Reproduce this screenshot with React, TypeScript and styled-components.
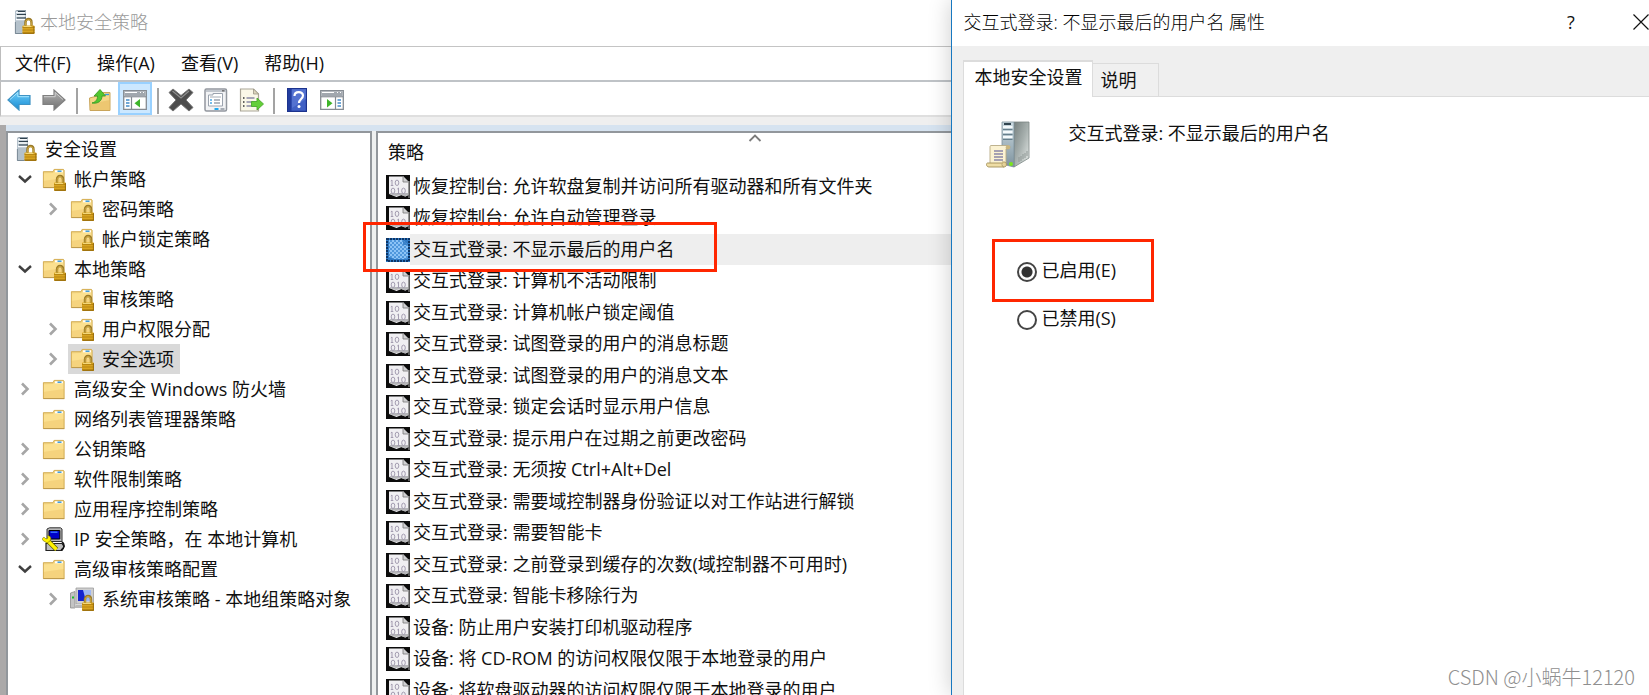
import React from "react";
import styled, { createGlobalStyle } from "styled-components";

const GlobalStyle = createGlobalStyle`
  * { box-sizing: border-box; }
  body {
    margin: 0;
    background: #fff;
    color: #101010;
    font-family: "Open Sans", "Noto Sans CJK SC", sans-serif;
    font-size: 18px;
    line-height: 24px;
  }
  button, input { font: inherit; color: inherit; margin: 0; }
  svg { display: block; flex: none; }
`;

const Desktop = styled.div`
  position: relative;
  display: flex;
  height: 100vh;
  overflow: hidden;
`;

/* ---------- console window ---------- */

const ConsoleWindow = styled.main`
  flex: 952 1 0;
  min-width: 0;
  display: flex;
  flex-direction: column;
  overflow: hidden;
`;

const TitleBar = styled.header`
  flex: none;
  height: 46px;
  padding: 0 0 2px 14px;
  display: flex;
  align-items: center;
  gap: 5px;
`;

const WindowTitle = styled.h1`
  margin: 0;
  font-size: 18px;
  font-weight: 300;
  color: #999;
`;

const MenuBar = styled.nav`
  flex: none;
  height: 36px;
  padding: 0 0 2px 14px;
  border-top: 1px solid #c4c4c4;
  border-bottom: 2px solid #bfc3c7;
  border-left: 1px solid #bdbdbd;
  display: flex;
  align-items: center;
  gap: 26px;
`;

const MenuButton = styled.button`
  padding: 0;
  border: 0;
  background: none;
`;

const ToolBar = styled.div`
  flex: none;
  height: 35px;
  padding-left: 1px;
  border-bottom: 2px solid #dfdfdf;
  border-left: 1px solid #bdbdbd;
  display: flex;
  align-items: center;
  gap: 1px;
`;

const ToolButton = styled.button<{ $active?: boolean }>`
  width: 34px;
  height: 33px;
  padding: 3px 0 0;
  display: flex;
  justify-content: center;
  align-items: center;
  border: 2px solid ${(p) => (p.$active ? "#99d1ff" : "transparent")};
  background: ${(p) => (p.$active ? "#cce8ff" : "none")};
`;

const ToolDivider = styled.span`
  width: 2px;
  height: 26px;
  margin: 4px 4px 0;
  background: #a3a3a3;
`;

const Spacer = styled.div`
  flex: none;
  height: 8px;
  background: #efefef;
`;

const Workspace = styled.div`
  flex: 1;
  min-height: 0;
  display: flex;
  gap: 4px;
  border-left: 6px solid #aba9a9;
  background: #eef0f0;
  box-shadow: inset 0 6px 0 #d6e3f0;
  padding-top: 6px;
`;

const TreePane = styled.nav`
  flex: 366 0 0;
  max-width: 366px;
  border: solid #92979c;
  border-width: 2px 2px 0 2px;
  background: #fff;
  padding-top: 1px;
  overflow: hidden;
`;

const TreeList = styled.ul`
  list-style: none;
  margin: 0;
  padding: 0;
`;

const TreeRow = styled.li<{ $level: number }>`
  height: 30px;
  padding-left: ${(p) => (p.$level === 2 ? 34 : 6)}px;
  display: flex;
  align-items: center;
`;

const Twisty = styled.button`
  width: 22px;
  height: 30px;
  margin-right: 4px;
  padding: 0;
  border: 0;
  background: none;
  display: flex;
  align-items: center;
  justify-content: center;
`;

const TreeLabel = styled.span<{ $selected?: boolean }>`
  height: 30px;
  padding: 0 6px 0 2px;
  display: flex;
  align-items: center;
  gap: 8px;
  white-space: nowrap;
  background: ${(p) => (p.$selected ? "#d9d9d9" : "transparent")};
`;

const ListPane = styled.section`
  flex: 570 1 0;
  min-width: 0;
  border: solid #92979c;
  border-width: 2px 0 0 2px;
  background: #fff;
  overflow: hidden;
`;

const PolicyTable = styled.table`
  width: 100%;
  min-width: 754px;
  border-collapse: collapse;
`;

const HeaderCell = styled.th`
  padding: 0;
  font-weight: 400;
`;

const HeaderContent = styled.div`
  height: 38px;
  display: grid;
  grid-template-columns: 1fr 14px 1fr;
  align-items: center;
  padding: 0 10px 1px;
  text-align: left;

  svg { align-self: start; }
`;

const PolicyCell = styled.td`
  padding: 0 0 0 8px;
`;

const PolicyRow = styled.tr``;

const PolicyContent = styled.div`
  height: 31px;
  display: flex;
  align-items: center;

  ${PolicyRow}:nth-child(even) & { height: 32px; }
`;

const PolicyName = styled.span<{ $selected?: boolean }>`
  flex: 1;
  align-self: stretch;
  display: flex;
  align-items: center;
  padding: 0 0 2px 3px;
  white-space: nowrap;
  background: ${(p) => (p.$selected ? "#eeeeee" : "transparent")};
`;

/* ---------- properties dialog ---------- */

const Dialog = styled.section`
  position: relative;
  flex: 697 1 0;
  min-width: 0;
  display: flex;
  flex-direction: column;
  border-left: 1px solid #1878c0;
  background: #efefef;
  box-shadow: 0 0 22px rgba(0, 0, 0, 0.2);
`;

const DialogTitleBar = styled.header`
  flex: none;
  height: 46px;
  padding: 0 0 2px 11px;
  background: #fff;
  display: flex;
  align-items: center;
`;

const DialogTitle = styled.h2`
  flex: 1;
  margin: 0;
  font-size: 18px;
  font-weight: 300;
  color: #000;
  white-space: nowrap;
`;

const CaptionButton = styled.button`
  width: 24px;
  height: 44px;
  margin-left: 46px;
  padding: 0;
  border: 0;
  background: none;
  text-align: center;

  &:last-child {
    width: 16px;
    margin-left: 50px;
  }
`;

const TabStrip = styled.div`
  flex: none;
  height: 51px;
  padding: 14px 0 0 11px;
  display: flex;
  align-items: flex-end;
`;

const Tab = styled.button<{ $active?: boolean }>`
  height: ${(p) => (p.$active ? 37 : 34)}px;
  width: ${(p) => (p.$active ? 130 : 66)}px;
  padding: ${(p) => (p.$active ? "0 0 6px 10px" : "0 0 0 7px")};
  border: solid #dcdcdc;
  border-width: ${(p) => (p.$active ? "2px 1px 0 1px" : "1px 1px 1px 0")};
  background: ${(p) => (p.$active ? "#fff" : "#f0f0f0")};
  text-align: left;
  white-space: nowrap;
`;

const TabRule = styled.span`
  flex: 1;
  height: 1px;
  background: #dcdcdc;
`;

const TabPanel = styled.div`
  flex: 1;
  margin-left: 11px;
  padding: 24px 0 0 22px;
  border-left: 1px solid #dcdcdc;
  background: #fff;
`;

const PolicyHeading = styled.div`
  height: 48px;
  display: flex;
  align-items: flex-start;
  gap: 38px;
`;

const HeadingText = styled.p`
  margin: 0;
`;

const OptionGroup = styled.fieldset`
  margin: 70px 0 0;
  padding: 0;
  border: 0;
  display: flex;
  flex-direction: column;
  align-items: flex-start;
`;

const HighlightFrame = styled.div`
  width: 162px;
  height: 63px;
  margin-left: 6px;
  border: 3px solid #ff2600;
  display: flex;
  align-items: center;
  padding: 0 0 1px 22px;
`;

const PlainOption = styled.div`
  margin: 4px 0 0 31px;
`;

const Option = styled.label`
  display: flex;
  align-items: center;
  gap: 4px;
`;

const Radio = styled.input`
  appearance: none;
  width: 20px;
  height: 20px;
  margin-top: 4px;
  border: 2px solid #444;
  border-radius: 50%;
  background: #fff;

  &:checked {
    background: radial-gradient(circle, #333 5px, #fff 6px);
  }
`;

const RowMarker = styled.div`
  position: absolute;
  left: 363px;
  top: 222px;
  width: 354px;
  height: 50px;
  border: 3px solid #ff2600;
  pointer-events: none;
`;

const Watermark = styled.span`
  position: absolute;
  right: 14px;
  bottom: 6px;
  font-family: "Noto Sans CJK SC", sans-serif;
  font-size: 20px;
  line-height: 24px;
  font-weight: 300;
  color: #8f8f8f;
`;

/* ---------- icons ---------- */

const Lock = () => (
  <g>
    <path d="M15 16v-3.500c0-4.600 6-4.600 6 0V16" fill="none" stroke="#9a7a28" strokeWidth="2.400" />
    <path d="M15.200 15v-2.500c0-3.800 5.600-3.800 5.600 0V15" fill="none" stroke="#d9b347" strokeWidth="0.900" />
    <rect x="12" y="15.500" width="12" height="8.500" rx="0.800" fill="#d9a520" />
    <path d="M12 17.500h12M12 20h12M12 22.500h12" stroke="#b07f10" strokeWidth="0.800" />
    <path d="M13 16.400h8" stroke="#f6dc83" strokeWidth="1" />
    <path d="M23.400 16v7.600H12.600" fill="none" stroke="#94690c" strokeWidth="0.900" />
  </g>
);

const ServerLockIcon = () => (
  <svg width="21" height="24" viewBox="0 0 21 24" aria-hidden="true">
    <path d="M1 1 3 0h9v22l-2 2H1z" fill="#8d9ba6" />
    <path d="M1 1h9.500v23H1z" fill="#b4c1cb" />
    <path d="M2 2.500h9.500M2 6h9.500M2 9.500h9.500" stroke="#f8fbfd" strokeWidth="1.600" />
    <path d="M4 1.500h7M3 4.500h9M3 8h9" stroke="#2f414d" strokeWidth="1.100" />
    <path d="M1.400 12v11.500H11" fill="none" stroke="#73828e" strokeWidth="0.900" />
    <g transform="translate(-3.500 0)"><Lock /></g>
  </svg>
);

const FolderShape = () => (
  <g>
    <path d="M1 4.500h10l1-2.500h9.500l.8 1.200V20.500H1z" fill="#f3d47f" />
    <path d="M1 6.500 11 6l2-1.700h9V20.500H1z" fill="#fbe08f" />
    <path d="M1 14 22 11v9.500H1z" fill="#f2cd76" opacity="0.7" />
    <path d="M1.400 20.500V4.700H11l1.200-2.300h9.200l.7 1v17.200z" fill="none" stroke="#d0aa55" strokeWidth="0.9" />
    <path d="M13 4.300h8" stroke="#fff" strokeWidth="2" />
    <path d="M15.500 4.200h4" stroke="#2f94d8" strokeWidth="1.400" />
    <path d="M1.400 20.600h21" stroke="#b99549" strokeWidth="0.9" />
  </g>
);

const FolderIcon = () => (
  <svg width="24" height="24" viewBox="0 0 24 24" aria-hidden="true"><g transform="translate(0 1)"><FolderShape /></g></svg>
);

const FolderLockIcon = () => (
  <svg width="24" height="24" viewBox="0 0 24 24" aria-hidden="true"><FolderShape /><Lock /></svg>
);

const IpSecurityIcon = () => (
  <svg width="24" height="24" viewBox="0 0 24 24" aria-hidden="true">
    <path d="M5 2 7.500.800h11L20 2v12.500H5z" fill="#b9b9b9" stroke="#333" strokeWidth="1" />
    <path d="M7 3.500h10.800v8.500H7z" fill="#0000c8" stroke="#000" strokeWidth="1" />
    <path d="M8.500 5.200h7" stroke="#3c78ff" strokeWidth="1.400" />
    <path d="M4 16.500h16l2 3-2 4H4z" fill="#bdbdbd" stroke="#222" strokeWidth="1.200" />
    <path d="M20 15c3 2 3 6-1 8" fill="none" stroke="#111" strokeWidth="1.600" />
    <path d="m5 13 9.500 9.500" stroke="#5c5a00" strokeWidth="4.600" />
    <path d="m5 13 9.500 9.500" stroke="#fff200" strokeWidth="3.200" />
    <path d="M1 13.500c-1.500-2 0-3.500 1.500-3l1.500 1.500 2-1-1-2c3-1 5 2 3 5l-3 2z" fill="#fff200" stroke="#76700a" strokeWidth="0.600" />
  </svg>
);

const AuditIcon = () => (
  <svg width="24" height="24" viewBox="0 0 24 24" aria-hidden="true">
    <path d="M.5 6 5 4.500V21H.5z" fill="#c4c4c4" stroke="#8d8d8d" strokeWidth="0.800" />
    <path d="M2 10.500h2" stroke="#1dbd2d" strokeWidth="2" />
    <path d="M6 1h17.500v16H6z" fill="#cfcfcf" stroke="#9d9d9d" strokeWidth="0.800" />
    <path d="M8 3h13v11H8z" fill="#1524cf" />
    <path d="M13 3h8v11h-5z" fill="#9fb8f4" />
    <path d="M6 18h8v3H4z" fill="#b8b8b8" />
    <Lock />
  </svg>
);

const ChevronRight = () => (
  <svg width="10" height="14" viewBox="0 0 10 14" aria-hidden="true">
    <path d="m2 1.500 5.500 5.500L2 12.500" fill="none" stroke="#a6a6a6" strokeWidth="2.600" />
  </svg>
);

const ChevronDown = () => (
  <svg width="14" height="10" viewBox="0 0 14 10" aria-hidden="true">
    <path d="m1 2 6 5.500L13 2" fill="none" stroke="#404040" strokeWidth="2.400" />
  </svg>
);

const SortIcon = () => (
  <svg width="14" height="10" viewBox="0 0 14 10" aria-hidden="true">
    <path d="m1.500 8 5.500-5.500 5.500 5.500" fill="none" stroke="#7b7b7b" strokeWidth="1.800" />
  </svg>
);

const BinaryIcon = () => (
  <svg width="24" height="24" viewBox="0 0 24 24" aria-hidden="true">
    <path d="M0 0h24v24H0z" fill="#0c0c0c" />
    <path d="M3 1.500h14l5.500 5.500v13l-3 1.500-4-1.500-5 2-7.500-3z" fill="#f0eff2" />
    <path d="M17 1v6h6z" fill="#d0d0d2" stroke="#777" strokeWidth="0.800" />
    <path d="M3 18 6 20l4 1 5-1 4 1.500 3-1.500v-2H3z" fill="#b5b5b8" />
    <g fill="none" stroke="#a39cb0" strokeWidth="1">
      <path d="M6 5v5.500M4.800 6l1.200-1M4.800 10.500h2.500" />
      <ellipse cx="11" cy="7.800" rx="1.800" ry="2.700" />
      <ellipse cx="7" cy="15.800" rx="1.800" ry="2.700" />
      <path d="M12.500 13v5.500M11.300 14l1.200-1M11.300 18.500h2.500" />
      <ellipse cx="17.500" cy="15.800" rx="1.800" ry="2.700" />
    </g>
    <path d="M23 6v17" stroke="#aaa" strokeWidth="1" />
  </svg>
);

const BinarySelectedIcon = () => (
  <svg width="24" height="24" viewBox="0 0 24 24" aria-hidden="true">
    <defs>
      <pattern id="dither" width="4" height="4" patternUnits="userSpaceOnUse">
        <path d="M0 0h4v4H0z" fill="#4f97dc" />
        <path d="M0 0h2v2H0zM2 2h2v2H2z" fill="#8cc3f6" />
      </pattern>
    </defs>
    <path d="M0 0h24v24H0z" fill="#2f79c4" />
    <path d="M3 2h14l5 5v13l-4 1H8l-5-2z" fill="url(#dither)" />
    <path d="m17 2 5 5h-5z" fill="#3b83cb" />
    <path d="M1 1h22v22H1z" fill="none" stroke="#0c3566" strokeWidth="2" strokeDasharray="2 1" />
  </svg>
);

const ArrowIcon = ({ back }: { back?: boolean }) => (
  <svg width="24" height="22" viewBox="0 0 24 22" aria-hidden="true">
    <defs>
      <linearGradient id={back ? "arrowBlue" : "arrowGrey"} x2="0" y2="1">
        <stop stopColor={back ? "#75d2fa" : "#b4b4b4"} />
        <stop offset="1" stopColor={back ? "#168bd4" : "#6f6f6f"} />
      </linearGradient>
    </defs>
    <path
      d={back ? "M1 11 12 1v5.500h11v9H12V21z" : "M23 11 12 1v5.500H1v9h11V21z"}
      fill={back ? "url(#arrowBlue)" : "url(#arrowGrey)"}
      stroke={back ? "#3f93c4" : "#808080"}
      strokeWidth="1.200"
    />
    <path
      d={back ? "M3 10.500 10.800 3.500v4.200H22" : "M2 7.700h11.200V3.500L21 10.500"}
      fill="none"
      stroke={back ? "#a5e5ff" : "#cdcdcd"}
      strokeWidth="1"
    />
  </svg>
);

const FolderUpIcon = () => (
  <svg width="24" height="24" viewBox="0 0 24 24" aria-hidden="true">
    <path d="M1.500 10 9 8l1-3.500h12V22.500h-20z" fill="#f5d687" stroke="#c9a55b" strokeWidth="1" />
    <path d="M2 16 22 12v10H2z" fill="#e8bd63" opacity="0.600" />
    <path d="M17 6.500h4" stroke="#3a9be0" strokeWidth="1.400" />
    <path d="M4 15c4-1 5.500-3.500 5.500-7H6l6-6.500L17.500 8H14c0 5-4 8-10 7z" fill="#51c72f" stroke="#3b9c25" strokeWidth="0.900" />
  </svg>
);

const PanelIcon = ({ flipped }: { flipped?: boolean }) => (
  <svg width="24" height="20" viewBox="0 0 24 20" aria-hidden="true">
    <path d="M.7.7h22.600v18.600H.7z" fill="#fff" stroke="#858b92" strokeWidth="1.300" />
    <path d="M1.300 1.300h21.400v5H1.300z" fill="#a1a7ae" />
    <path d="M2 2.500h12M17 2.500h1M20 2.500h1" stroke="#fff" strokeWidth="1" />
    <path d="M1 6.800h22" stroke="#7c828a" strokeWidth="1" />
    <g transform={flipped ? "matrix(-1 0 0 1 24 0)" : undefined}>
      <path d="M8.500 7v12.500" stroke="#858b92" strokeWidth="1.200" />
      <path d="M3 10h3.500M3 13h3.500M3 16h3.500" stroke="#438bc7" strokeWidth="1.500" />
      <path d="M17 9v8.500L11.500 13.200z" fill="#3fb52a" />
    </g>
  </svg>
);

const DeleteIcon = () => (
  <svg width="26" height="24" viewBox="0 0 26 24" aria-hidden="true">
    <path d="M5 1 13 7.500 21 1l4 3.500-7 7.500 7 7.500-4 3.500-8-7-8 7-4-3.500L8 12 1 4.500z" fill="#4d4d4d" stroke="#777" strokeWidth="1" strokeLinejoin="round" />
    <path d="m4.500 3 8.500 7 8-7" fill="none" stroke="#8f8f8f" strokeWidth="1.200" />
  </svg>
);

const PropertiesIcon = () => (
  <svg width="24" height="24" viewBox="0 0 24 24" aria-hidden="true">
    <rect x="1" y="1" width="21.500" height="22" rx="1.500" fill="#f2f3f5" stroke="#92979e" strokeWidth="1.500" />
    <path d="M2 3h20" stroke="#c1c6cd" strokeWidth="2" />
    <path d="M18 2.800h2.500" stroke="#666" strokeWidth="1.300" />
    <path d="M4.500 7h4.500V5.500h9.500V18h-14z" fill="#fff" stroke="#9ba3ae" strokeWidth="1" />
    <path d="M6 9h11" stroke="#a5acb5" strokeWidth="1" />
    <path d="M6 12h2M6 15h2" stroke="#4aa6e5" strokeWidth="1.400" />
    <path d="M10 12h6M10 15h6" stroke="#9ba3ae" strokeWidth="1.400" />
    <path d="M10.500 21h4" stroke="#20a9ef" strokeWidth="2" />
    <path d="M16.500 21h4" stroke="#a7adb5" strokeWidth="2" />
  </svg>
);

const ExportIcon = () => (
  <svg width="25" height="24" viewBox="0 0 25 24" aria-hidden="true">
    <path d="M1.500 1h13l5 5v17h-18z" fill="#fbf8e8" stroke="#aaa597" strokeWidth="1.200" />
    <path d="M14.500 1v5h5z" fill="#ddd6bd" stroke="#9d9787" strokeWidth="0.800" />
    <path d="M4 10h1.500M4 14h1.500M4 18h1.500" stroke="#333" strokeWidth="1.700" />
    <path d="M7.500 10h8M7.500 14h6M7.500 18h6" stroke="#8c8aa6" strokeWidth="1.500" />
    <path d="M12.500 13.500H18V10l6.500 6-6.500 6v-3.500h-5.500z" fill="#64cf38" stroke="#4ca82d" strokeWidth="0.900" />
  </svg>
);

const HelpIcon = () => (
  <svg width="20" height="24" viewBox="0 0 20 24" aria-hidden="true">
    <path d="M.6.600h18.800v22.800H.6z" fill="#4060c4" stroke="#1c338e" strokeWidth="1.200" />
    <path d="M1 1h3.500v22H1z" fill="#233d9f" />
    <path d="M5 1h14v10L5 20z" fill="#6d8ae0" opacity="0.450" />
    <path d="M7.500 8c0-5 8.500-5 8.500-.5 0 3.500-4 3.500-4 7.500" fill="none" stroke="#fff" strokeWidth="2.200" />
    <circle cx="12" cy="18.500" r="1.500" fill="#fff" />
  </svg>
);

const ServerScrollIcon = () => (
  <svg width="44" height="47" viewBox="0 0 44 47" aria-hidden="true">
    <defs>
      <linearGradient id="serverSide" x2="1" y2="1">
        <stop stopColor="#76807f" />
        <stop offset="0.500" stopColor="#a7b0ae" />
        <stop offset="1" stopColor="#e8ecea" />
      </linearGradient>
      <linearGradient id="serverFront" x2="0" y2="1">
        <stop stopColor="#ccdbe2" />
        <stop offset="1" stopColor="#7d929d" />
      </linearGradient>
    </defs>
    <path d="M28 1h15v36L28 46z" fill="url(#serverSide)" stroke="#7b8684" strokeWidth="0.800" />
    <path d="M16 1h12v45l-12-3z" fill="url(#serverFront)" stroke="#7c8f99" strokeWidth="0.800" />
    <path d="M18 3h7" stroke="#20343f" strokeWidth="1.800" />
    <path d="M17 6h9.500M17 11h9.500M17 16h9.500" stroke="#f5fafc" strokeWidth="1.800" />
    <path d="M17 8.500h9.500M17 13.500h9.500M17 18.500h9.500" stroke="#667e8b" strokeWidth="1" />
    <path d="M33 36v5M35 35v5M37 33v5M39 32v5M41 30v5" stroke="#8a9391" strokeWidth="0.900" />
    <circle cx="25" cy="43" r="2" fill="#7be51d" />
    <path d="M5 24.500h17.500c2 0 2 3 0 3.500H20v17H4V27c0-1.500 0-2.500 1-2.500z" fill="#fbf2d2" stroke="#b8aa84" strokeWidth="0.900" />
    <path d="M20 28c-1-2 0-3.500 2-3.500s3 2 1 3.500z" fill="#c9b67e" />
    <path d="M8 30h9M8 33h9M8 36h9M8 39h9" stroke="#8b86a8" strokeWidth="1.300" />
    <path d="M1.500 42h15c-1 2 0 4 1.500 4H3c-3 0-3-4-1.500-4z" fill="#eedda5" stroke="#a28e58" strokeWidth="0.900" />
    <path d="M18 46c3 0 3-4 1-5h-3" fill="#e5d296" stroke="#a28e58" strokeWidth="0.800" />
  </svg>
);

const CloseIcon = () => (
  <svg width="16" height="16" viewBox="0 0 16 16" aria-hidden="true">
    <path d="m.5.500 15 15m0-15-15 15" stroke="#111" strokeWidth="1.200" />
  </svg>
);

/* ---------- data ---------- */

type NodeIcon = "root" | "locked" | "folder" | "ip" | "audit";
type TreeNode = {
  label: string;
  level: number;
  icon: NodeIcon;
  state?: "open" | "closed";
  selected?: boolean;
};

const treeNodes: TreeNode[] = [
  { label: "安全设置", level: 0, icon: "root" },
  { label: "帐户策略", level: 1, icon: "locked", state: "open" },
  { label: "密码策略", level: 2, icon: "locked", state: "closed" },
  { label: "帐户锁定策略", level: 2, icon: "locked" },
  { label: "本地策略", level: 1, icon: "locked", state: "open" },
  { label: "审核策略", level: 2, icon: "locked" },
  { label: "用户权限分配", level: 2, icon: "locked", state: "closed" },
  { label: "安全选项", level: 2, icon: "locked", state: "closed", selected: true },
  { label: "高级安全 Windows 防火墙", level: 1, icon: "folder", state: "closed" },
  { label: "网络列表管理器策略", level: 1, icon: "folder" },
  { label: "公钥策略", level: 1, icon: "folder", state: "closed" },
  { label: "软件限制策略", level: 1, icon: "folder", state: "closed" },
  { label: "应用程序控制策略", level: 1, icon: "folder", state: "closed" },
  { label: "IP 安全策略，在 本地计算机", level: 1, icon: "ip", state: "closed" },
  { label: "高级审核策略配置", level: 1, icon: "folder", state: "open" },
  { label: "系统审核策略 - 本地组策略对象", level: 2, icon: "audit", state: "closed" },
];

const nodeIcons: Record<NodeIcon, React.FC> = {
  root: ServerLockIcon,
  locked: FolderLockIcon,
  folder: FolderIcon,
  ip: IpSecurityIcon,
  audit: AuditIcon,
};

const policies = [
  "恢复控制台: 允许软盘复制并访问所有驱动器和所有文件夹",
  "恢复控制台: 允许自动管理登录",
  "交互式登录: 不显示最后的用户名",
  "交互式登录: 计算机不活动限制",
  "交互式登录: 计算机帐户锁定阈值",
  "交互式登录: 试图登录的用户的消息标题",
  "交互式登录: 试图登录的用户的消息文本",
  "交互式登录: 锁定会话时显示用户信息",
  "交互式登录: 提示用户在过期之前更改密码",
  "交互式登录: 无须按 Ctrl+Alt+Del",
  "交互式登录: 需要域控制器身份验证以对工作站进行解锁",
  "交互式登录: 需要智能卡",
  "交互式登录: 之前登录到缓存的次数(域控制器不可用时)",
  "交互式登录: 智能卡移除行为",
  "设备: 防止用户安装打印机驱动程序",
  "设备: 将 CD-ROM 的访问权限仅限于本地登录的用户",
  "设备: 将软盘驱动器的访问权限仅限于本地登录的用户",
];

const selectedPolicy = policies[2];

/* ---------- page ---------- */

const Tree = () => (
  <TreePane>
    <TreeList>
      {treeNodes.map((node) => {
        const Icon = nodeIcons[node.icon];
        return (
          <TreeRow key={node.label} $level={node.level}>
            {node.level > 0 && (
              <Twisty as={node.state ? "button" : "span"}>
                {node.state === "open" && <ChevronDown />}
                {node.state === "closed" && <ChevronRight />}
              </Twisty>
            )}
            <TreeLabel $selected={node.selected}>
              <Icon />
              {node.label}
            </TreeLabel>
          </TreeRow>
        );
      })}
    </TreeList>
  </TreePane>
);

const PolicyList = () => (
  <ListPane>
    <PolicyTable>
      <thead>
        <tr>
          <HeaderCell scope="col">
            <HeaderContent>
              <span>策略</span>
              <SortIcon />
            </HeaderContent>
          </HeaderCell>
        </tr>
      </thead>
      <tbody>
        {policies.map((policy) => {
          const selected = policy === selectedPolicy;
          return (
            <PolicyRow key={policy}>
              <PolicyCell>
                <PolicyContent>
                  {selected ? <BinarySelectedIcon /> : <BinaryIcon />}
                  <PolicyName $selected={selected}>{policy}</PolicyName>
                </PolicyContent>
              </PolicyCell>
            </PolicyRow>
          );
        })}
      </tbody>
    </PolicyTable>
  </ListPane>
);

const PropertiesDialog = () => (
  <Dialog role="dialog" aria-labelledby="dialog-title">
    <DialogTitleBar>
      <DialogTitle id="dialog-title">{selectedPolicy} 属性</DialogTitle>
      <CaptionButton>?</CaptionButton>
      <CaptionButton aria-label="关闭"><CloseIcon /></CaptionButton>
    </DialogTitleBar>
    <TabStrip role="tablist">
      <Tab role="tab" aria-selected="true" $active>本地安全设置</Tab>
      <Tab role="tab" aria-selected="false">说明</Tab>
      <TabRule />
    </TabStrip>
    <TabPanel role="tabpanel">
      <PolicyHeading>
        <ServerScrollIcon />
        <HeadingText>{selectedPolicy}</HeadingText>
      </PolicyHeading>
      <OptionGroup aria-label={selectedPolicy}>
        <HighlightFrame>
          <Option>
            <Radio type="radio" name="policy-state" defaultChecked />
            已启用(E)
          </Option>
        </HighlightFrame>
        <PlainOption>
          <Option>
            <Radio type="radio" name="policy-state" />
            已禁用(S)
          </Option>
        </PlainOption>
      </OptionGroup>
    </TabPanel>
  </Dialog>
);

export default function App() {
  return (
    <>
      <GlobalStyle />
      <Desktop>
        <ConsoleWindow>
          <TitleBar>
            <ServerLockIcon />
            <WindowTitle>本地安全策略</WindowTitle>
          </TitleBar>
          <MenuBar>
            <MenuButton>文件(F)</MenuButton>
            <MenuButton>操作(A)</MenuButton>
            <MenuButton>查看(V)</MenuButton>
            <MenuButton>帮助(H)</MenuButton>
          </MenuBar>
          <ToolBar role="toolbar">
            <ToolButton aria-label="后退"><ArrowIcon back /></ToolButton>
            <ToolButton aria-label="前进"><ArrowIcon /></ToolButton>
            <ToolDivider />
            <ToolButton aria-label="向上一级"><FolderUpIcon /></ToolButton>
            <ToolButton aria-label="显示/隐藏控制台树" $active><PanelIcon /></ToolButton>
            <ToolDivider />
            <ToolButton aria-label="删除"><DeleteIcon /></ToolButton>
            <ToolButton aria-label="属性"><PropertiesIcon /></ToolButton>
            <ToolButton aria-label="导出列表"><ExportIcon /></ToolButton>
            <ToolDivider />
            <ToolButton aria-label="帮助"><HelpIcon /></ToolButton>
            <ToolButton aria-label="显示/隐藏操作窗格"><PanelIcon flipped /></ToolButton>
          </ToolBar>
          <Spacer />
          <Workspace>
            <Tree />
            <PolicyList />
          </Workspace>
        </ConsoleWindow>
        <PropertiesDialog />
        <RowMarker />
        <Watermark>CSDN @小蜗牛12120</Watermark>
      </Desktop>
    </>
  );
}
